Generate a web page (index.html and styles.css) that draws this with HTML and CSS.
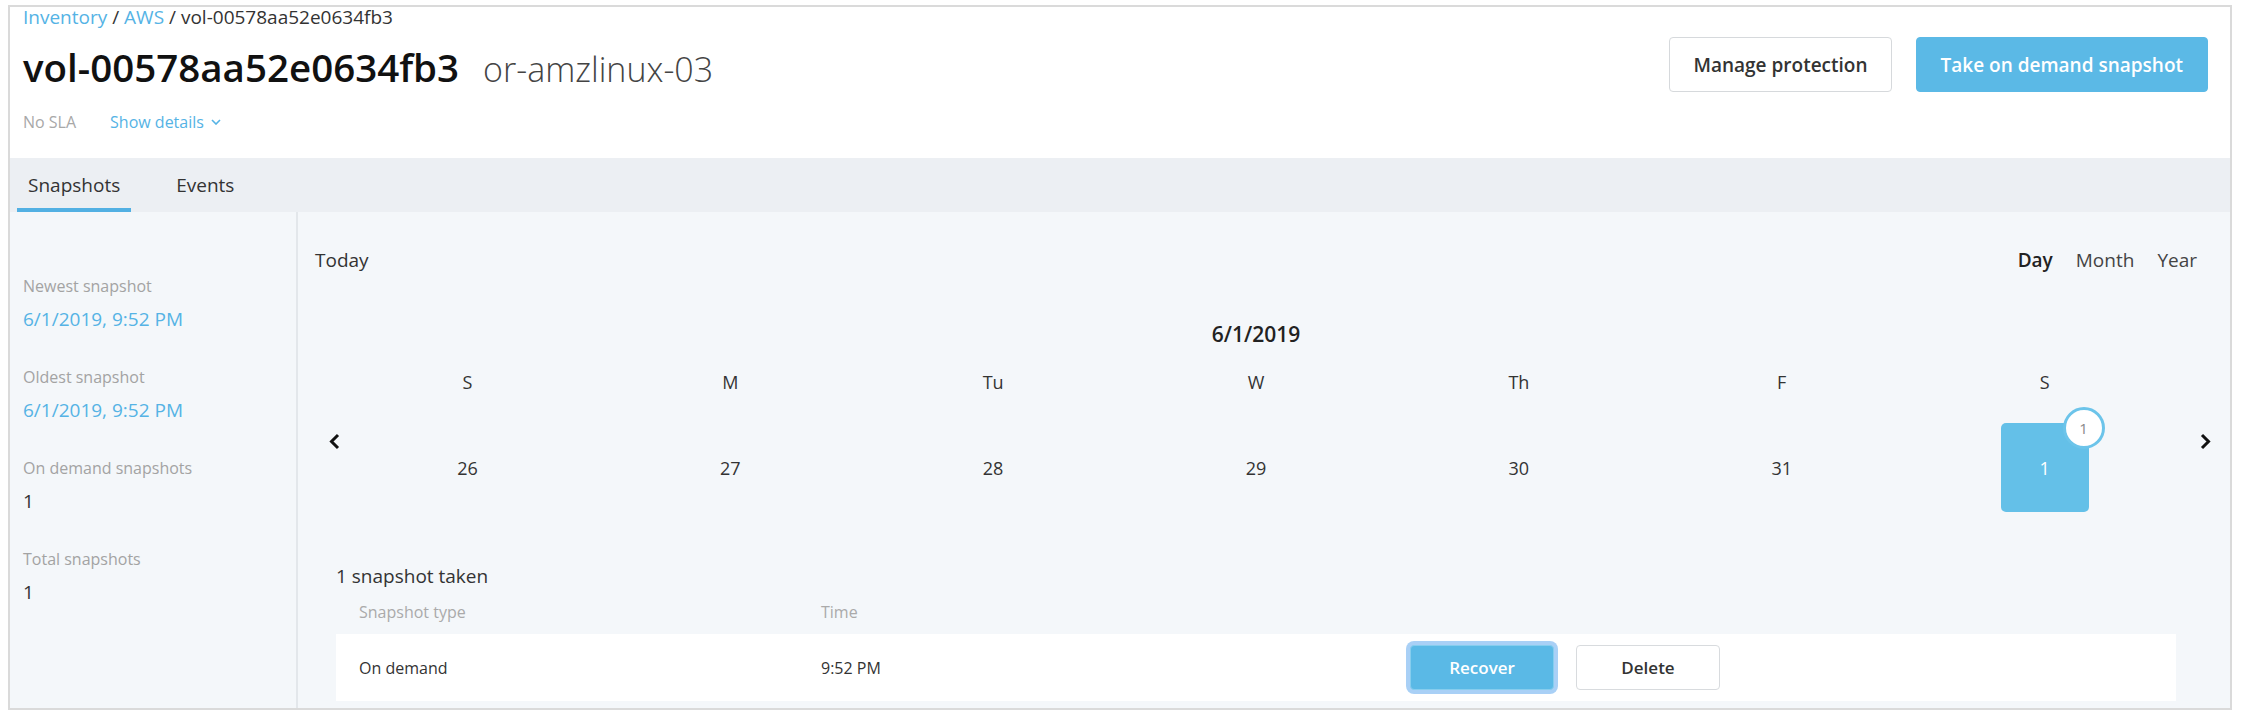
FILE: index.html
```html
<!DOCTYPE html>
<html lang="en">
<head>
<meta charset="utf-8">
<title>vol-00578aa52e0634fb3</title>
<link rel="stylesheet" href="styles.css">
</head>
<body>
<div class="frame">
  <header class="page-header">
    <div class="hdr-left">
      <nav class="crumbs"><a href="#">Inventory</a> / <a href="#">AWS</a> / vol-00578aa52e0634fb3</nav>
      <h1 class="title"><span class="vol">vol-00578aa52e0634fb3</span><span class="host">or-amzlinux-03</span></h1>
      <div class="meta">
        <span class="sla">No SLA</span>
        <span class="details">Show details
          <svg width="10" height="6" viewBox="0 0 10 6"><path d="M1 1 L5 5 L9 1" fill="none" stroke="#55b3e5" stroke-width="1.6"/></svg>
        </span>
      </div>
    </div>
    <div class="actions">
      <button class="btn">Manage protection</button>
      <button class="btn primary">Take on demand snapshot</button>
    </div>
  </header>

  <div class="tabs">
    <div class="tab active">Snapshots</div>
    <div class="tab">Events</div>
  </div>

  <div class="content">
    <aside class="side">
      <div class="stat">
        <div class="stat-label">Newest snapshot</div>
        <div class="stat-value link">6/1/2019, 9:52 PM</div>
      </div>
      <div class="stat">
        <div class="stat-label">Oldest snapshot</div>
        <div class="stat-value link">6/1/2019, 9:52 PM</div>
      </div>
      <div class="stat">
        <div class="stat-label">On demand snapshots</div>
        <div class="stat-value">1</div>
      </div>
      <div class="stat">
        <div class="stat-label">Total snapshots</div>
        <div class="stat-value">1</div>
      </div>
    </aside>

    <main class="main">
      <div class="toolbar">
        <span class="today">Today</span>
        <div class="range"><span class="on">Day</span><span>Month</span><span>Year</span></div>
      </div>

      <div class="period">6/1/2019</div>

      <div class="cal">
        <div class="nav prev">
          <svg width="12" height="17" viewBox="0 0 12 17"><path d="M10 2 L3.5 8.5 L10 15" fill="none" stroke="#111" stroke-width="3"/></svg>
        </div>
        <div class="grid">
          <div class="wk">S</div>
          <div class="wk">M</div>
          <div class="wk">Tu</div>
          <div class="wk">W</div>
          <div class="wk">Th</div>
          <div class="wk">F</div>
          <div class="wk">S</div>
          <div class="day">26</div>
          <div class="day">27</div>
          <div class="day">28</div>
          <div class="day">29</div>
          <div class="day">30</div>
          <div class="day">31</div>
          <div class="day"><div class="day-box sel">1<span class="badge">1</span></div></div>
        </div>
        <div class="nav next">
          <svg width="12" height="17" viewBox="0 0 12 17"><path d="M2 2 L8.5 8.5 L2 15" fill="none" stroke="#111" stroke-width="3"/></svg>
        </div>
      </div>

      <section class="list">
        <div class="list-title">1 snapshot taken</div>
        <div class="thead"><span class="c1">Snapshot type</span><span class="c2">Time</span></div>
        <div class="row">
          <span class="c1">On demand</span>
          <span class="c2">9:52 PM</span>
          <span class="c3">
            <button class="sbtn primary">Recover</button>
            <button class="sbtn">Delete</button>
          </span>
        </div>
      </section>
    </main>
  </div>
</div>
</body>
</html>
```
FILE: styles.css
```css
* { box-sizing: border-box; }

body {
  margin: 0;
  background: #fff;
  font-family: "Open Sans", "Noto Sans", sans-serif;
  color: #333;
}

.frame {
  margin: 5px 0 0 8px;
  width: 2224px;
  height: 705px;
  border: 2px solid #dadada;
  display: flex;
  flex-direction: column;
  overflow: hidden;
}

/* header */
.page-header {
  height: 151px;
  flex: none;
  display: flex;
  justify-content: space-between;
  padding: 0 22px 0 13px;
  background: #fff;
}

.crumbs {
  font-size: 19px;
  line-height: 20px;
  color: #333;
}
.crumbs a { color: #55b3e5; text-decoration: none; }

.title {
  margin: 16px 0 0;
  font-size: 38.5px;
  line-height: 48px;
  font-weight: 600;
  color: #111;
  display: flex;
  align-items: baseline;
  gap: 24px;
}
.title .host {
  font-size: 34px;
  font-weight: 300;
  color: #444;
}

.meta {
  margin-top: 18px;
  font-size: 16px;
  line-height: 22px;
  display: flex;
  gap: 34px;
}
.sla { color: #a8a8a8; }
.details {
  color: #55b3e5;
  display: flex;
  align-items: center;
  gap: 7px;
}

.actions {
  display: flex;
  align-items: flex-start;
  gap: 24px;
  margin-top: 30px;
}
.btn {
  height: 55px;
  border-radius: 4px;
  font-family: "Open Sans", sans-serif;
  font-weight: 600;
  font-size: 19px;
  padding: 0 23px;
  border: 1px solid #d6d9dc;
  background: #fff;
  color: #333;
}
.btn.primary {
  background: #5bb9e6;
  border-color: #5bb9e6;
  color: #fff;
  padding: 0 24px;
}

/* tabs */
.tabs {
  height: 54px;
  flex: none;
  background: #eceff3;
  display: flex;
  gap: 34px;
  padding-left: 7px;
}
.tab {
  padding: 14px 11px 0;
  border-bottom: 4px solid transparent;
  font-size: 19px;
  line-height: 26px;
  color: #333;
}
.tab.active { border-bottom-color: #52b0e3; }

/* body */
.content {
  flex: 1;
  min-height: 0;
  display: flex;
  background: #f4f7fa;
}

.side {
  width: 288px;
  flex: none;
  border-right: 2px solid #e3e7eb;
  padding: 63px 0 0 13px;
}
.stat { margin-bottom: 34px; }
.stat-label {
  font-size: 16px;
  line-height: 22px;
  color: #a3a3a3;
}
.stat-value {
  margin-top: 9px;
  font-size: 19px;
  line-height: 26px;
  color: #333;
}
.stat-value.link { color: #55b3e5; }

.main {
  flex: 1;
  min-width: 0;
  padding: 35px 18px 0 17px;
}

.toolbar {
  display: flex;
  justify-content: space-between;
  font-size: 19px;
  line-height: 26px;
  color: #333;
}
.range {
  display: flex;
  gap: 23px;
  margin-right: 15px;
  color: #444;
}
.range .on { font-weight: 600; color: #222; }

.period {
  margin: 47px 36px 0 21px;
  text-align: center;
  font-size: 21px;
  line-height: 28px;
  font-weight: 600;
  color: #222;
}

.cal {
  display: flex;
  align-items: center;
  margin-top: 22px;
}
.nav {
  width: 21px;
  flex: none;
  display: flex;
  justify-content: flex-end;
}
.nav.prev svg { margin-right: -4px; }
.nav.next { width: 36px; }

.grid {
  flex: 1;
  display: grid;
  grid-template-columns: repeat(7, 1fr);
  row-gap: 29px;
  text-align: center;
}
.wk {
  font-size: 18px;
  line-height: 24px;
  color: #333;
}
.day {
  height: 89px;
  display: flex;
  align-items: center;
  justify-content: center;
  font-size: 18px;
  line-height: 24px;
  color: #333;
}
.day-box.sel {
  position: relative;
  width: 88px;
  height: 89px;
  background: #64c0e8;
  border-radius: 5px;
  color: #fff;
  display: flex;
  align-items: center;
  justify-content: center;
}
.badge {
  position: absolute;
  top: -16px;
  right: -16px;
  width: 42px;
  height: 42px;
  border-radius: 50%;
  background: #fff;
  border: 3px solid #6cc4ea;
  font-size: 15px;
  color: #888;
  display: flex;
  align-items: center;
  justify-content: center;
}

/* list */
.list { margin: 51px 36px 0 21px; }
.list-title {
  font-size: 19px;
  line-height: 26px;
  color: #333;
}
.thead {
  margin-top: 12px;
  display: flex;
  padding-left: 23px;
  font-size: 16px;
  line-height: 22px;
  color: #aaa;
}
.row {
  margin-top: 11px;
  height: 67px;
  background: #fff;
  display: flex;
  align-items: center;
  padding-left: 23px;
  font-size: 16px;
  line-height: 22px;
  color: #333;
}
.c1 { width: 462px; flex: none; }
.c2 { width: 589px; flex: none; }
.c3 { display: flex; gap: 22px; }

.sbtn {
  width: 144px;
  height: 45px;
  border-radius: 4px;
  font-family: "Open Sans", sans-serif;
  font-weight: 600;
  font-size: 17px;
  border: 1px solid #d8dbde;
  background: #fff;
  color: #333;
}
.sbtn.primary {
  background: #5ab9e6;
  border-color: #86cdee;
  color: #fff;
  box-shadow: 0 0 0 4px #a9d0f6;
}
```
